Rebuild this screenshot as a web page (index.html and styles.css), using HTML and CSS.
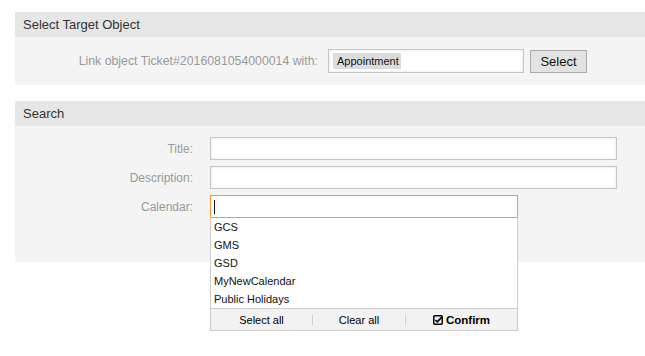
FILE: index.html
```html
<!DOCTYPE html>
<html lang="en">
<head>
<meta charset="utf-8">
<title>Link Object</title>
<link rel="stylesheet" href="styles.css">
</head>
<body>
<div class="page">
  <section class="widget">
    <div class="widget-header">Select Target Object</div>
    <div class="widget-body link-row">
      <label class="link-label">Link object Ticket#2016081054000014 with:</label>
      <div class="field link-field"><span class="tag">Appointment</span></div>
      <button class="btn" type="button">Select</button>
    </div>
  </section>

  <section class="widget search">
    <div class="widget-header">Search</div>
    <div class="widget-body form-grid">
      <label class="form-label">Title:</label>
      <div class="field wide"></div>
      <label class="form-label">Description:</label>
      <div class="field wide"></div>
      <label class="form-label">Calendar:</label>
      <div class="calendar-wrap">
        <div class="field focused"><span class="caret"></span></div>
        <div class="dropdown">
          <ul class="options">
            <li>GCS</li>
            <li>GMS</li>
            <li>GSD</li>
            <li>MyNewCalendar</li>
            <li>Public Holidays</li>
          </ul>
          <div class="dd-footer">
            <span class="dd-action a1">Select all</span>
            <span class="dd-action a2">Clear all</span>
            <span class="dd-action a3 confirm">
              <svg class="check" width="10" height="10" viewBox="0 0 10 10" aria-hidden="true">
                <rect x="0.75" y="0.75" width="8.5" height="8.5" rx="1" fill="none" stroke="#000" stroke-width="1.5"/>
                <path d="M2.4 5 L4.3 6.9 L8.6 2.4" fill="none" stroke="#000" stroke-width="1.6"/>
              </svg>Confirm</span>
          </div>
        </div>
      </div>
    </div>
  </section>
</div>
</body>
</html>
```

FILE: styles.css
```css
html, body {
  margin: 0;
  padding: 0;
  background: #fff;
}

body {
  min-height: 356px;
  font-family: "Liberation Sans", Arial, sans-serif;
  font-size: 12px;
  color: #333;
}

.page {
  padding: 12px 0 0 15px;
  min-height: 356px;
  box-sizing: border-box;
}

.widget + .widget {
  margin-top: 16px;
}

.widget-header {
  height: 25px;
  line-height: 25px;
  padding-left: 8px;
  background: #e6e6e6;
  color: #333;
  font-size: 13px;
}

.widget-body {
  background: #f4f4f4;
}

/* first widget */
.link-row {
  display: flex;
  align-items: center;
  padding: 12px 0;
}

.link-label {
  width: 303px;
  text-align: right;
  color: #999;
  font-size: 12.3px;
}

.field {
  box-sizing: border-box;
  height: 23px;
  background: #fff;
  border: 1px solid #c6c6c6;
  box-shadow: inset 0 0 3px rgba(0, 0, 0, 0.12);
}

.link-field {
  width: 196px;
  height: 24px;
  margin-left: 10px;
  display: flex;
  align-items: center;
  padding-left: 4px;
}

.tag {
  display: inline-block;
  height: 16px;
  line-height: 16px;
  padding: 0 4px;
  width: 60px;
  background: #dcdcdc;
  color: #111;
  font-size: 11px;
}

.btn {
  margin-left: 6px;
  box-sizing: border-box;
  width: 57px;
  height: 23px;
  border: 1px solid #ababab;
  background: #e2e2e2;
  color: #111;
  font-family: "Liberation Sans", Arial, sans-serif;
  font-size: 13px;
  padding: 0;
}

/* search widget */
.form-grid {
  display: grid;
  grid-template-columns: 178px 407px;
  column-gap: 17px;
  row-gap: 6px;
  align-items: center;
  padding: 11px 0 44px;
}

.form-label {
  text-align: right;
  color: #999;
  font-size: 12px;
}

.calendar-wrap {
  position: relative;
  width: 308px;
}

.field.focused {
  border-color: #f39c33;
  box-shadow: none;
  display: flex;
  align-items: center;
  padding-left: 3px;
}

.caret {
  display: block;
  width: 1px;
  height: 14px;
  background: #111;
}

.dropdown {
  position: absolute;
  z-index: 10;
  top: 100%;
  left: 0;
  width: 308px;
  box-sizing: border-box;
  background: #fff;
  border: 1px solid #cdcdcd;
  border-top: none;
}

.options {
  list-style: none;
  margin: 0;
  padding: 0;
}

.options li {
  height: 18px;
  line-height: 18px;
  padding-left: 3px;
  font-size: 11px;
  color: #111;
}

.dd-footer {
  display: flex;
  align-items: center;
  height: 21px;
  border-top: 1px solid #cdcdcd;
  background: #f2f2f2;
  font-size: 11px;
  color: #000;
}

.dd-action {
  display: flex;
  align-items: center;
  justify-content: center;
  height: 10px;
  line-height: 10px;
}

.a1 { width: 101px; }
.a2 { width: 92px; border-left: 1px solid #cfcfcf; }
.a3 { flex: 1; border-left: 1px solid #cfcfcf; }

.confirm {
  font-weight: bold;
  font-size: 11.5px;
}

.check {
  margin-right: 3px;
}
```
